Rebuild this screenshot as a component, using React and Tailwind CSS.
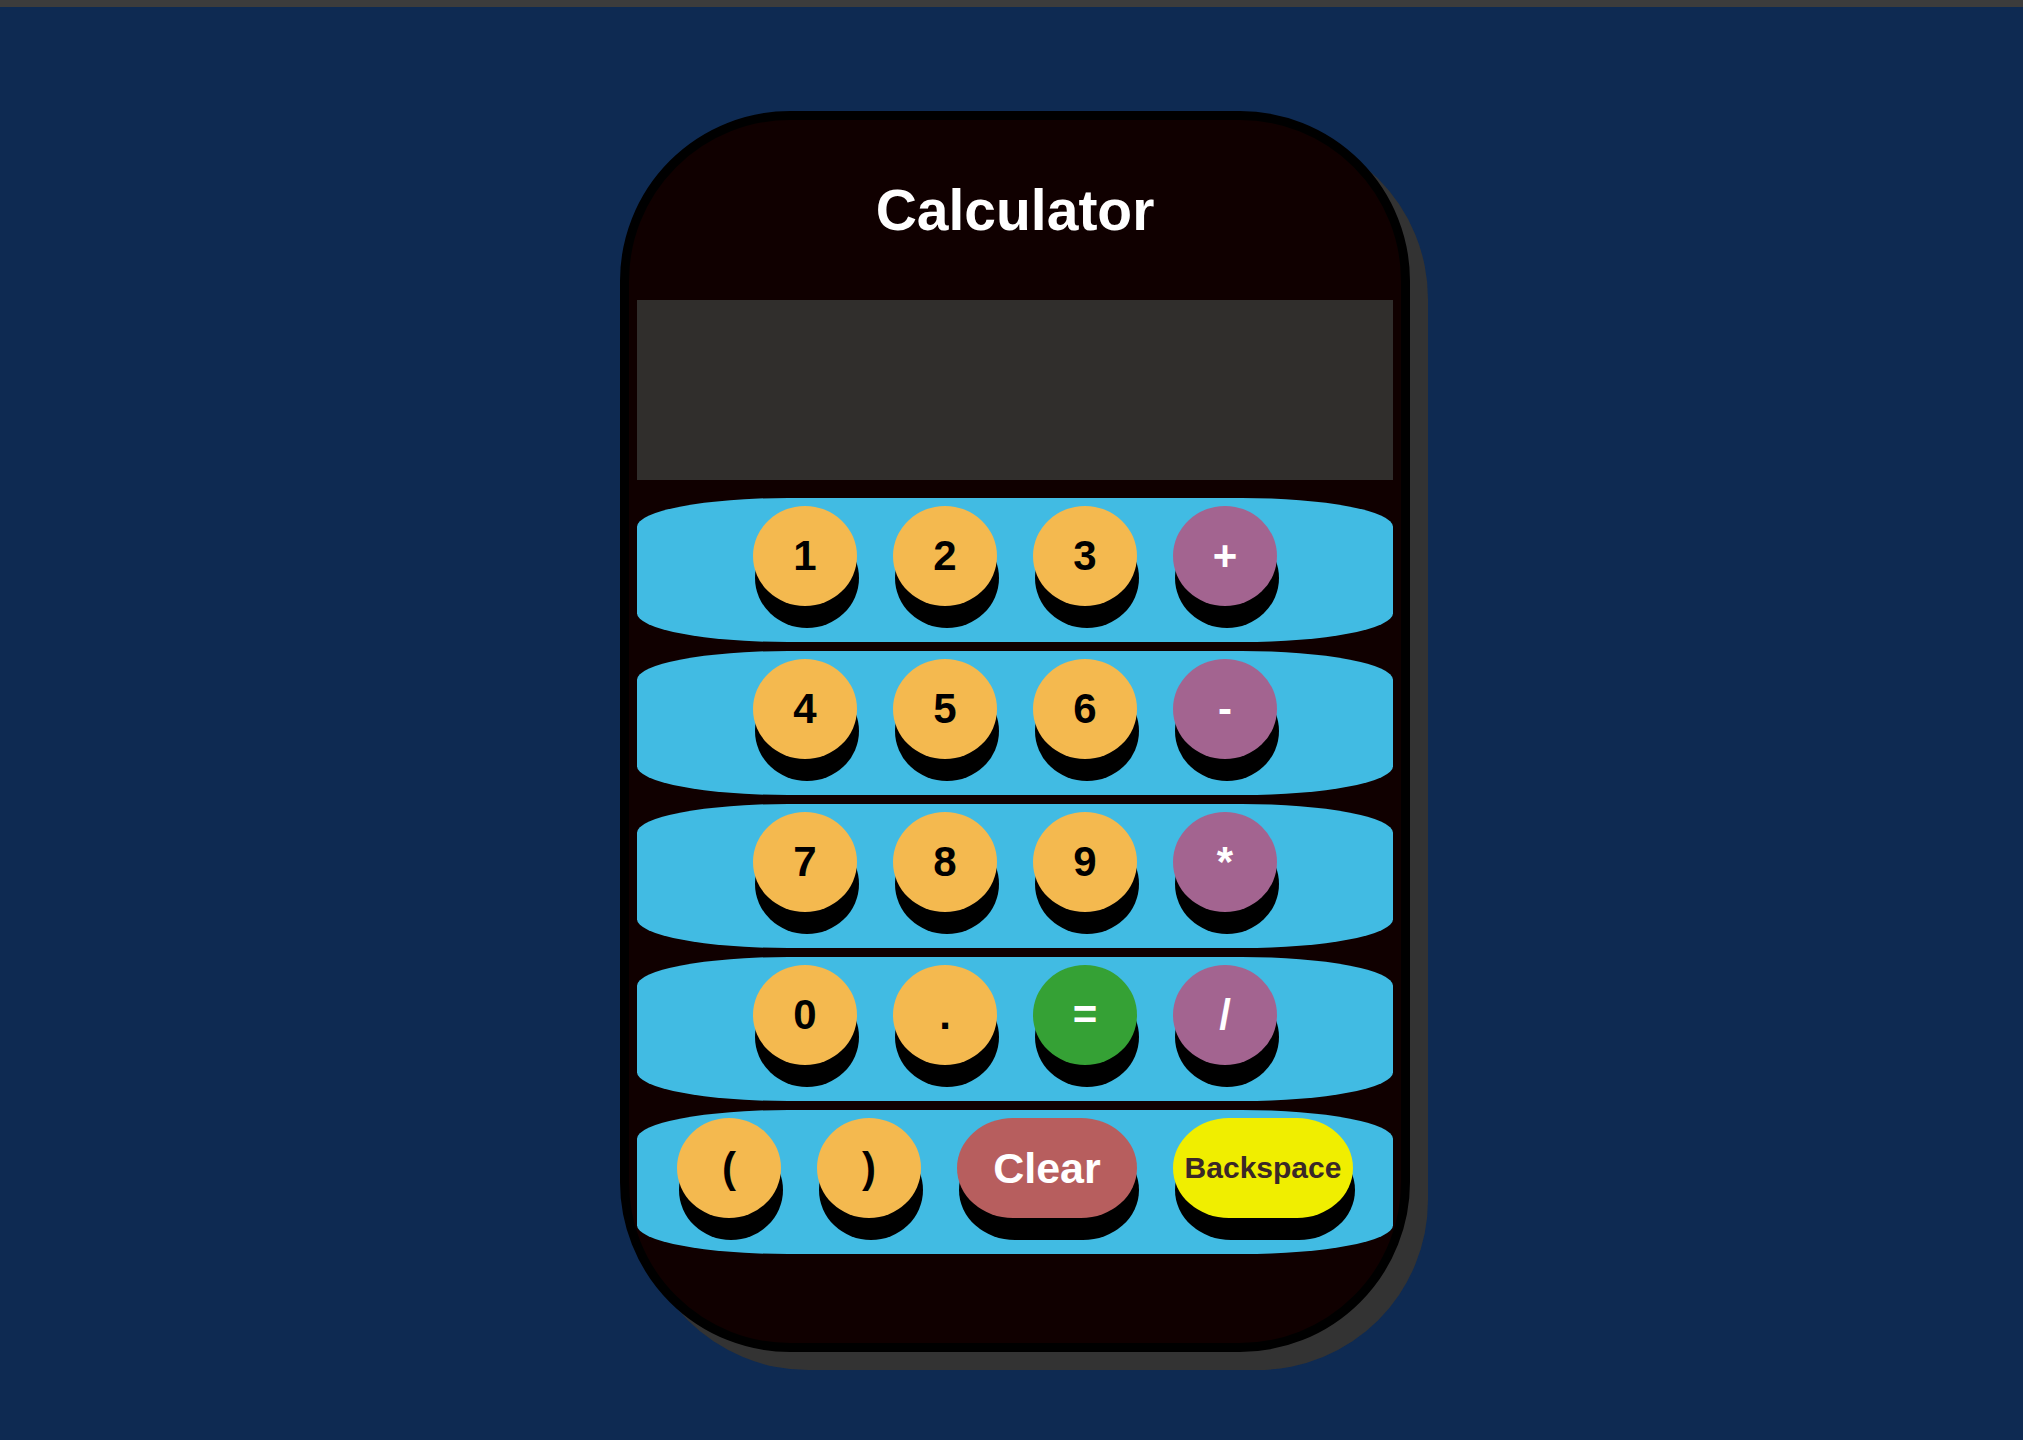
import React from "react";

const rows = [
  [
    { label: "1", kind: "num" },
    { label: "2", kind: "num" },
    { label: "3", kind: "num" },
    { label: "+", kind: "op" },
  ],
  [
    { label: "4", kind: "num" },
    { label: "5", kind: "num" },
    { label: "6", kind: "num" },
    { label: "-", kind: "op" },
  ],
  [
    { label: "7", kind: "num" },
    { label: "8", kind: "num" },
    { label: "9", kind: "num" },
    { label: "*", kind: "op" },
  ],
  [
    { label: "0", kind: "num" },
    { label: ".", kind: "num" },
    { label: "=", kind: "eq" },
    { label: "/", kind: "op" },
  ],
  [
    { label: "(", kind: "num" },
    { label: ")", kind: "num" },
    { label: "Clear", kind: "clear" },
    { label: "Backspace", kind: "back" },
  ],
];

const styles = {
  num: "w-[104px] rounded-[50%] bg-[#f4b94f] text-black text-[42px]",
  op: "w-[104px] rounded-[50%] bg-[#a36490] text-white text-[42px]",
  eq: "w-[104px] rounded-[50%] bg-[#35a135] text-white text-[42px]",
  clear: "w-[180px] rounded-[56px/50px] bg-[#b75e5e] text-white text-[43px]",
  back: "w-[180px] rounded-[56px/50px] bg-[#f0ee00] text-[#3a2828] text-[30px]",
};

const Key = ({ label, kind }) => (
  <button
    className={`h-[100px] flex items-center justify-center font-bold leading-none shadow-[2px_22px_0_#000] cursor-pointer ${styles[kind]}`}
  >
    {label}
  </button>
);

export default function App() {
  return (
    <div
      className="min-h-screen bg-[#0e2a52]"
      style={{ fontFamily: '"Liberation Sans", Arial, sans-serif' }}
    >
      <div className="h-[7px] bg-[#3c3c3c]" />
      <div className="flex justify-center pt-[104px] pl-[7px]">
        <div className="w-[790px] border-[9px] border-black bg-[#100000] rounded-[170px] shadow-[18px_18px_0_#333] px-[8px] pb-[89px]">
          <div className="h-[180px] flex items-center justify-center">
            <h1 className="text-white text-[57px] font-bold leading-none">Calculator</h1>
          </div>
          <div className="h-[180px] bg-[#302e2c]" />
          <div className="mt-[18px] flex flex-col gap-[9px]">
            {rows.map((row, i) => (
              <div
                key={i}
                className="h-[144px] bg-[#41bbe3] rounded-[20%] flex justify-center items-start gap-[36px] pt-[8px]"
              >
                {row.map((k) => (
                  <Key key={k.label} {...k} />
                ))}
              </div>
            ))}
          </div>
        </div>
      </div>
    </div>
  );
}
